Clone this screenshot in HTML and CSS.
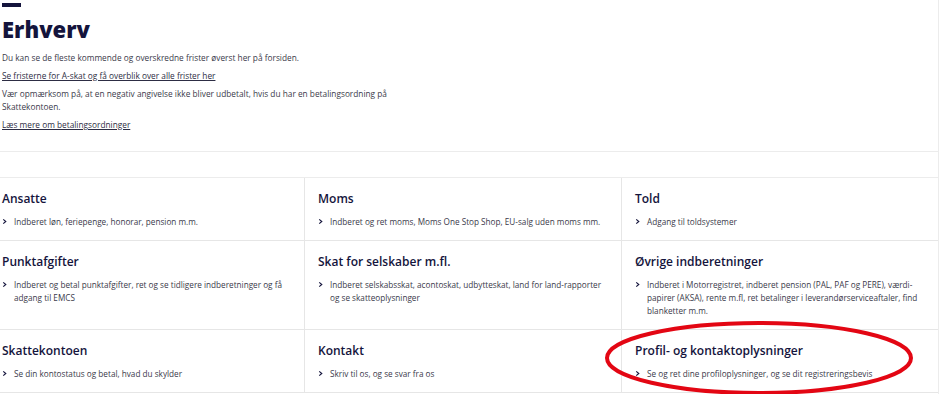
FILE: index.html
```html
<!DOCTYPE html>
<html lang="da">
<head>
    <meta charset="UTF-8">
    <meta name="viewport" content="width=device-width, initial-scale=1.0">
    <title>Erhverv</title>
    <link rel="stylesheet" href="styles.css">
</head>
<body>
    <div class="page">
        <div class="intro">
            <div class="bar"></div>
            <h1>Erhverv</h1>
            <p>Du kan se de fleste kommende og overskredne frister øverst her på forsiden.</p>
            <p><a href="#">Se fristerne for A-skat og få overblik over alle frister her</a></p>
            <p class="narrow">Vær opmærksom på, at en negativ angivelse ikke bliver udbetalt, hvis du har en betalingsordning på Skattekontoen.</p>
            <p><a href="#">Læs mere om betalingsordninger</a></p>
        </div>
        <div class="spacer"></div>
        <div class="tiles">
            <div class="tile">
                <h3>Ansatte</h3>
                <a class="item" href="#"><svg viewBox="0 0 6 8"><path d="M1.5 1.5 L4.5 4 L1.5 6.5"/></svg><span>Indberet løn, feriepenge, honorar, pension m.m.</span></a>
            </div>
            <div class="tile">
                <h3>Moms</h3>
                <a class="item" href="#"><svg viewBox="0 0 6 8"><path d="M1.5 1.5 L4.5 4 L1.5 6.5"/></svg><span>Indberet og ret moms, Moms One Stop Shop, EU-salg uden moms mm.</span></a>
            </div>
            <div class="tile">
                <h3>Told</h3>
                <a class="item" href="#"><svg viewBox="0 0 6 8"><path d="M1.5 1.5 L4.5 4 L1.5 6.5"/></svg><span>Adgang til toldsystemer</span></a>
            </div>
            <div class="tile">
                <h3>Punktafgifter</h3>
                <a class="item" href="#"><svg viewBox="0 0 6 8"><path d="M1.5 1.5 L4.5 4 L1.5 6.5"/></svg><span>Indberet og betal punktafgifter, ret og se tidligere indberetninger og få adgang til EMCS</span></a>
            </div>
            <div class="tile">
                <h3>Skat for selskaber m.fl.</h3>
                <a class="item" href="#"><svg viewBox="0 0 6 8"><path d="M1.5 1.5 L4.5 4 L1.5 6.5"/></svg><span>Indberet selskabsskat, acontoskat, udbytteskat, land for land-rapporter og se skatteoplysninger</span></a>
            </div>
            <div class="tile">
                <h3>Øvrige indberetninger</h3>
                <a class="item" href="#"><svg viewBox="0 0 6 8"><path d="M1.5 1.5 L4.5 4 L1.5 6.5"/></svg><span>Indberet i Motorregistret, indberet pension (PAL, PAF og PERE), værdi-papirer (AKSA), rente m.fl, ret betalinger i leverandørserviceaftaler, find blanketter m.m.</span></a>
            </div>
            <div class="tile">
                <h3>Skattekontoen</h3>
                <a class="item" href="#"><svg viewBox="0 0 6 8"><path d="M1.5 1.5 L4.5 4 L1.5 6.5"/></svg><span>Se din kontostatus og betal, hvad du skylder</span></a>
            </div>
            <div class="tile">
                <h3>Kontakt</h3>
                <a class="item" href="#"><svg viewBox="0 0 6 8"><path d="M1.5 1.5 L4.5 4 L1.5 6.5"/></svg><span>Skriv til os, og se svar fra os</span></a>
            </div>
            <div class="tile">
                <h3>Profil- og kontaktoplysninger</h3>
                <a class="item" href="#"><svg viewBox="0 0 6 8"><path d="M1.5 1.5 L4.5 4 L1.5 6.5"/></svg><span>Se og ret dine profiloplysninger, og se dit registreringsbevis</span></a>
            </div>
        </div>
        <svg class="marker" viewBox="0 0 320 80"><ellipse cx="160" cy="38" rx="152" ry="35"/></svg>
    </div>
</body>
</html>
```

FILE: styles.css
```css
body {
    margin: 0;
    background: white;
    font-family: 'Open Sans', Lato, sans-serif;
    color: #3a3a4a;
}
.page {
    position: relative;
    width: 938px;
    border-right: 1px solid #ececec;
    min-height: 394px;
}
.intro {
    padding: 3px 0 0 2px;
}
.bar {
    width: 19px;
    height: 4px;
    background: #14143c;
}
h1 {
    margin: 11px 0 11px;
    font-size: 22px;
    line-height: 1;
    font-weight: 800;
    color: #14143c;
}
.intro p {
    margin: 0 0 5px;
    font-size: 8.3px;
    line-height: 13px;
}
.intro p.narrow {
    width: 400px;
}
.intro a {
    color: #2d2d44;
}
.spacer {
    height: 25px;
    margin-top: 20px;
    border-top: 1px solid #ececec;
}
.tiles {
    display: grid;
    grid-template-columns: 304px 317px 1fr;
    border-top: 1px solid #ececec;
}
.tile {
    padding: 13px 14px 12px 13px;
    border-bottom: 1px solid #e6e6e6;
    border-left: 1px solid #e6e6e6;
}
.tile:nth-child(3n+1) {
    padding-left: 2px;
    border-left: none;
}
.tile h3 {
    margin: 0 0 8px;
    font-size: 12px;
    line-height: 16px;
    font-weight: 600;
    color: #14143c;
}
.item {
    display: flex;
    gap: 7px;
    font-size: 8.2px;
    line-height: 13px;
    color: #3a3a4a;
    text-decoration: none;
}
.item svg {
    flex: none;
    width: 5px;
    height: 7px;
    margin-top: 3px;
    fill: none;
    stroke: #14143c;
    stroke-width: 1.4;
}
.marker {
    position: absolute;
    left: 599px;
    top: 320px;
    width: 320px;
    height: 80px;
    overflow: visible;
}
.marker ellipse {
    fill: none;
    stroke: #e30613;
    stroke-width: 4;
}
```
